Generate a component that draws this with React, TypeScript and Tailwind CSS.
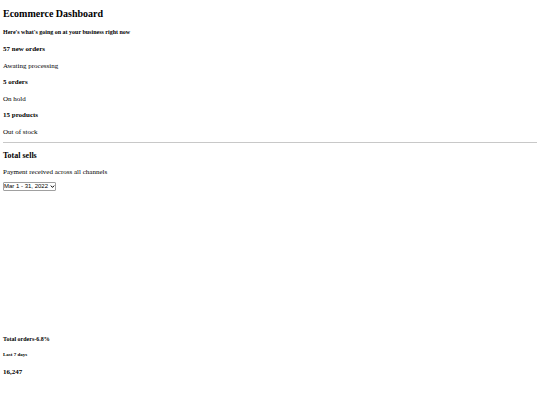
import React, { useState } from 'react';

const orderStats = [
  { title: '57 new orders', note: 'Awating processing' },
  { title: '5 orders', note: 'On hold' },
  { title: '15 products', note: 'Out of stock' },
];

const periods = ['Mar 1 - 31, 2022', 'April 1 - 30, 2022', 'May 1 - 31, 2022'];

export default function App() {
  const [period, setPeriod] = useState(periods[0]);

  return (
    <main className="bg-white px-[3px] pt-2 font-['Liberation_Serif',serif] text-black">
      <h2 className="text-[10px] leading-3 font-bold">Ecommerce Dashboard</h2>
      <h5 className="mt-2 text-[6px] leading-2 font-bold">
        Here's what's going on at your business right now
      </h5>

      {/* Order stats */}
      <div className="mt-[9px] flex flex-col gap-2">
        {orderStats.map((stat) => (
          <div key={stat.title} className="flex flex-col gap-[9px]">
            <h4 className="text-[7px] leading-2 font-bold">{stat.title}</h4>
            <p className="text-[7px] leading-2">{stat.note}</p>
          </div>
        ))}
      </div>

      <hr className="mt-1.5 border-[#c8c8c8]" />

      {/* Total sells */}
      <section>
        <h3 className="mt-[9px] text-[8px] leading-2 font-bold">Total sells</h3>
        <p className="mt-2 text-[7px] leading-2">Payment received across all channels</p>
        <div className="relative mt-1.5 w-[53px]">
          <select
            aria-label="Period"
            value={period}
            onChange={(e) => setPeriod(e.target.value)}
            className="block h-[9px] w-full appearance-none rounded-[1px] border border-[#a0a0a0] bg-white font-['Liberation_Sans',sans-serif] text-[6px] leading-[7px]"
          >
            {periods.map((item) => (
              <option key={item}>{item}</option>
            ))}
          </select>
          <svg viewBox="0 0 5 4" className="pointer-events-none absolute top-[3px] right-px h-1 w-[5px]" aria-hidden="true">
            <path d="M0.8 0.6 L2.5 2.4 L4.2 0.6" fill="none" stroke="black" strokeWidth="1" />
          </svg>
        </div>
      </section>

      {/* Total orders */}
      <section className="mt-36">
        <h5 className="text-[6px] leading-2 font-bold">Total orders<span>-6.8%</span></h5>
        <h6 className="mt-2 text-[5px] leading-2 font-bold">Last 7 days</h6>
        <h4 className="mt-[9px] text-[7px] leading-2 font-bold">16,247</h4>
      </section>
    </main>
  );
}
